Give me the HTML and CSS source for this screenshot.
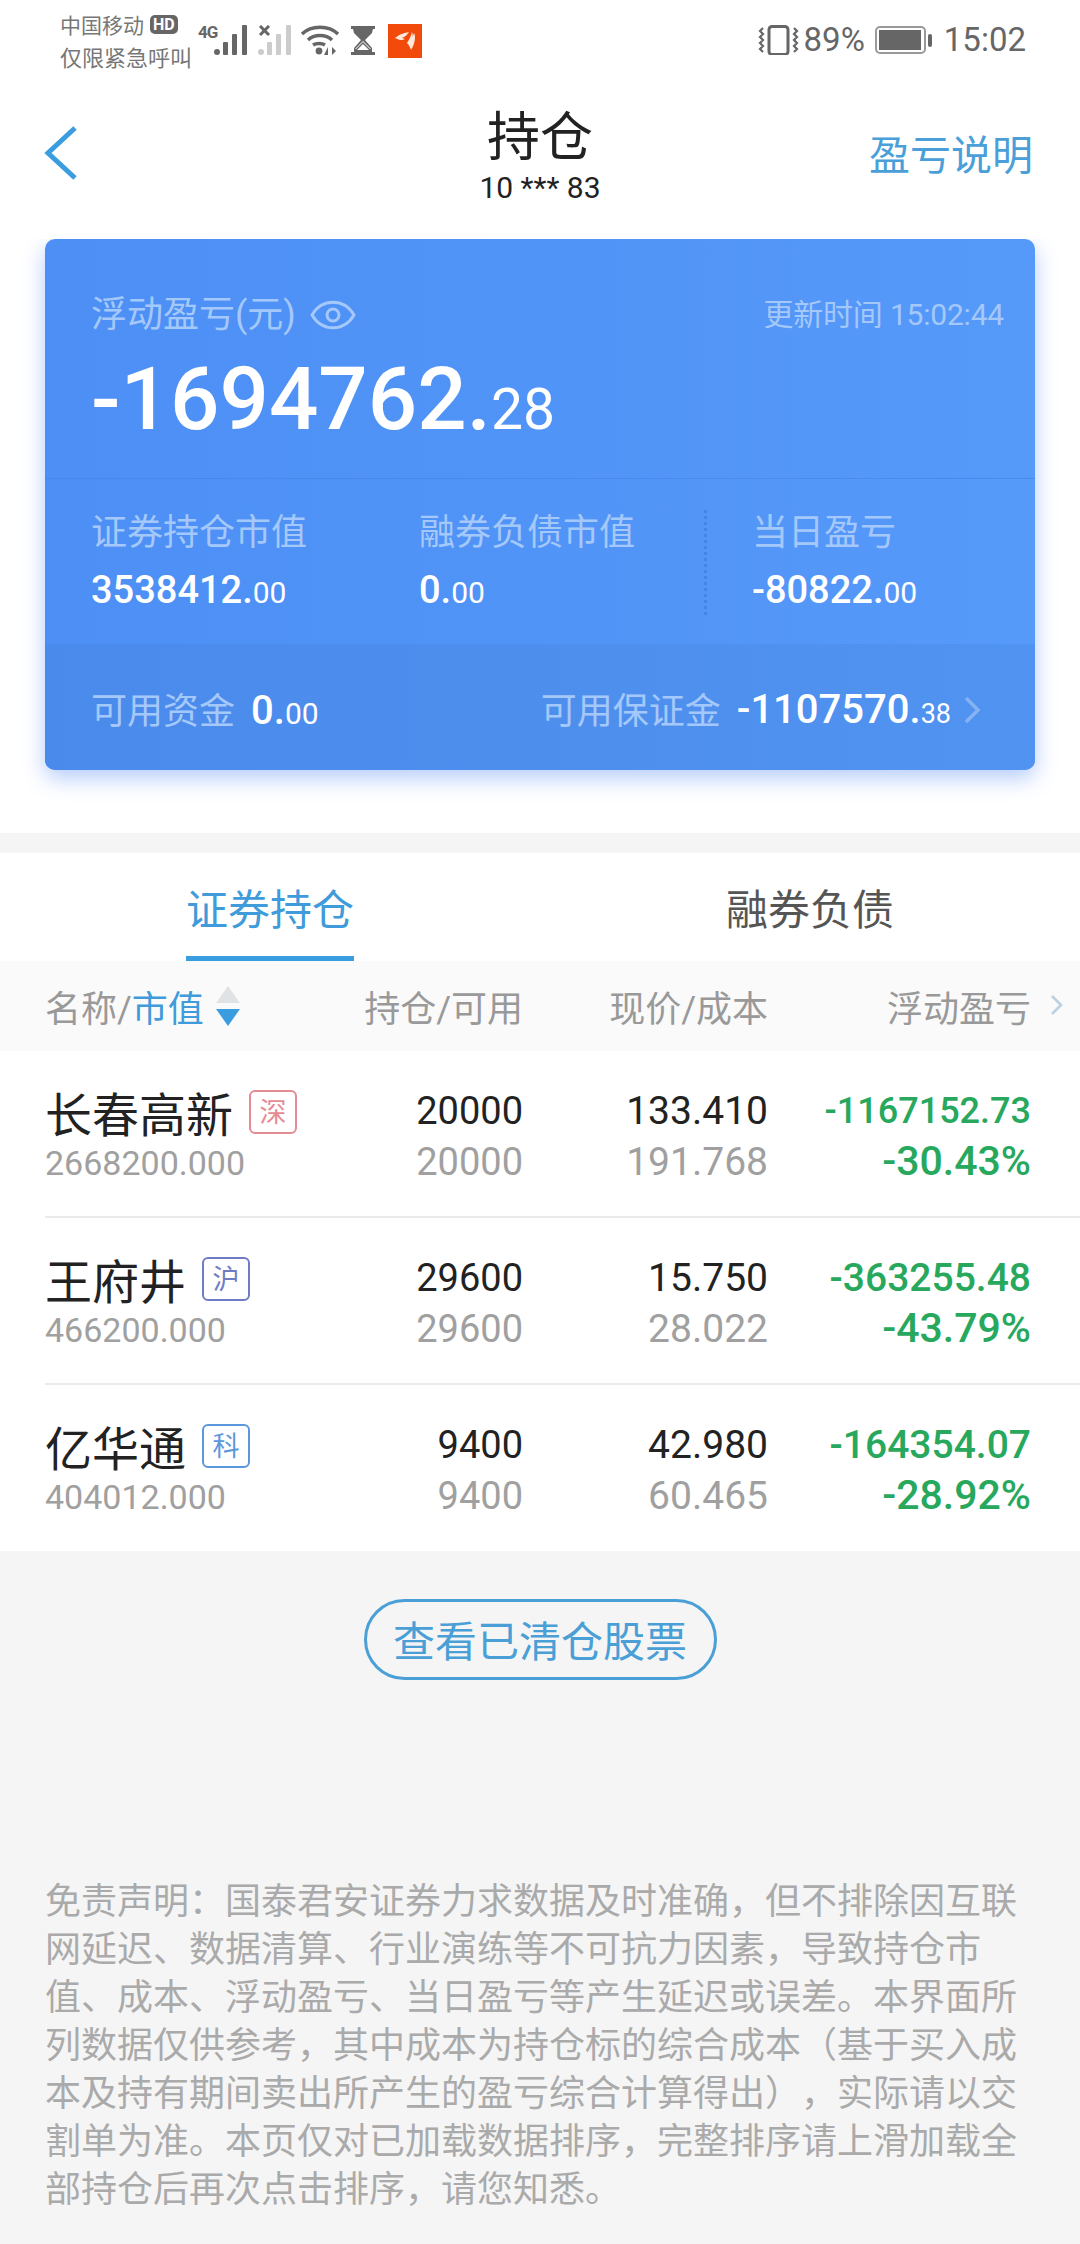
FILE: index.html
```html
<!DOCTYPE html>
<html lang="zh-CN">
<head>
<meta charset="utf-8">
<title>持仓</title>
<link rel="stylesheet" href="styles.css">
</head>
<body>
<div class="page">
  <header class="status">
    <div class="carrier">
      <div class="carrier-line">中国移动<span class="hd">HD</span></div>
      <div class="carrier-line second">仅限紧急呼叫</div>
    </div>
    <span class="net">4G</span>
    <svg class="ic-signal" width="34" height="30" viewBox="0 0 34 30"><circle cx="3" cy="27" r="3" fill="#666"/><rect x="9" y="17" width="5" height="13" rx="1" fill="#666"/><rect x="18" y="9" width="5" height="21" rx="1" fill="#666"/><rect x="28" y="0" width="5" height="30" rx="1" fill="#666"/></svg>
    <svg class="ic-signal2" width="34" height="30" viewBox="0 0 34 30"><path d="M2 1l9 9M11 1l-9 9" stroke="#666" stroke-width="3"/><circle cx="3" cy="27" r="3" fill="#ccc"/><rect x="9" y="17" width="5" height="13" rx="1" fill="#ccc"/><rect x="18" y="9" width="5" height="21" rx="1" fill="#ccc"/><rect x="28" y="0" width="5" height="30" rx="1" fill="#ccc"/></svg>
    <svg class="ic-wifi" width="38" height="30" viewBox="0 0 38 30" fill="none" stroke="#666" stroke-width="3.4"><path d="M1 9C10 0 28 0 37 9"/><path d="M7 15C13 9 25 9 31 15"/><path d="M12 20c3-2 9-2 12 0"/><circle cx="18" cy="26" r="3.4" fill="#666" stroke="none"/><path d="M27 30v-8l-4 8zM31 22v8l4-4z" fill="#666" stroke="none"/></svg>
    <svg class="ic-glass" width="24" height="29" viewBox="0 0 24 29"><rect x="0" y="0" width="24" height="3" fill="#666"/><rect x="0" y="26" width="24" height="3" fill="#666"/><path d="M2 3h20l-1 4-7 7 7 8v4H3v-4l7-8-7-7z" fill="#666"/><path d="M6 24l6-6 6 6z" fill="#fff"/><path d="M12 15l-8 8h1l7-7 7 7h1z" fill="#fff"/></svg>
    <svg class="ic-app" width="34" height="34" viewBox="0 0 34 34"><rect width="34" height="34" fill="#f24a0a"/><path d="M7 14c5-4 9-5 14-6-2 3-4 5-7 6l3 1c-3 2-6 1-10-1z" fill="#ffe9dc"/><path d="M19 19c2-3 4-7 5-11 1 3 1 5 0 7l2-6c2 4 1 10-3 17-1-3-2-5-4-7z" fill="#ffe9dc"/></svg>
    <div class="status-right">
      <svg width="41" height="30" viewBox="0 0 41 30" fill="none" stroke="#666"><rect x="11" y="1.5" width="19" height="28" rx="3" stroke-width="3"/><path d="M5 3l-3 3 3 3-3 3 3 3-3 3 3 3-3 3 3 3M36 3l3 3-3 3 3 3-3 3 3 3-3 3 3 3-3 3" stroke-width="2.2"/></svg>
      <span class="pct">89%</span>
      <svg width="58" height="28" viewBox="0 0 58 28"><rect x="1" y="1" width="49" height="26" rx="4" fill="none" stroke="#999" stroke-width="2"/><rect x="4" y="4" width="42" height="20" fill="#666"/><rect x="53" y="8" width="4" height="13" rx="2" fill="#666"/></svg>
      <span class="clock">15:02</span>
    </div>
  </header>

  <nav class="nav">
    <svg class="back" width="34" height="56" viewBox="0 0 34 56" fill="none"><path d="M31 3L4 28l27 25" stroke="#3a9de0" stroke-width="5"/></svg>
    <div class="nav-title">
      <div class="title">持仓</div>
      <div class="account">10 *** 83</div>
    </div>
    <div class="nav-link">盈亏说明</div>
  </nav>

  <section class="card-wrap">
    <div class="card">
      <div class="card-top">
        <div class="card-head">
          <div class="label-wrap">
            <span class="label">浮动盈亏(元)</span>
            <svg class="eye" width="46" height="32" viewBox="0 0 46 32" fill="none" stroke="#a5c8fa" stroke-width="3"><path d="M2 16C12 -1 34 -1 44 16 34 33 12 33 2 16z"/><circle cx="23" cy="16" r="6"/></svg>
          </div>
          <span class="updated">更新时间 15:02:44</span>
        </div>
        <div class="big">-1694762.<span class="big-dec">28</span></div>
      </div>
      <div class="card-mid">
        <div class="cell">
          <div class="label">证券持仓市值</div>
          <div class="val">3538412.<span class="dec">00</span></div>
        </div>
        <div class="cell">
          <div class="label">融券负债市值</div>
          <div class="val">0.<span class="dec">00</span></div>
        </div>
        <div class="cell cell-last">
          <div class="label">当日盈亏</div>
          <div class="val">-80822.<span class="dec">00</span></div>
        </div>
      </div>
      <div class="card-bottom">
        <div class="pair">
          <span class="label">可用资金</span>
          <span class="val">0.<span class="dec">00</span></span>
        </div>
        <div class="pair">
          <span class="label">可用保证金</span>
          <span class="val">-1107570.<span class="dec small">38</span></span>
          <svg class="more" width="18" height="30" viewBox="0 0 18 30" fill="none"><path d="M3 3l12 12L3 27" stroke="#86b1f2" stroke-width="3.6"/></svg>
        </div>
      </div>
    </div>
  </section>

  <div class="gap"></div>

  <section class="holdings">
    <div class="tabs">
      <div class="tab active"><span class="tab-text">证券持仓</span></div>
      <div class="tab"><span class="tab-text">融券负债</span></div>
    </div>
    <div class="grid head">
      <div class="head-name">名称/<span class="blue">市值</span><svg class="sort" width="24" height="40" viewBox="0 0 24 40"><path d="M12 0l12 17H0z" fill="#dfe3e6"/><path d="M0 23h24L12 40z" fill="#3a9de0"/></svg></div>
      <div class="r">持仓/可用</div>
      <div class="r">现价/成本</div>
      <div class="r head-last">浮动盈亏<svg class="head-more" width="13" height="22" viewBox="0 0 13 22" fill="none"><path d="M2 2l9 9-9 9" stroke="#bcd0e0" stroke-width="2.6"/></svg></div>
    </div>

    <div class="grid row">
      <div>
        <div class="name">长春高新<span class="badge sz">深</span></div>
        <div class="sub">2668200.000</div>
      </div>
      <div class="r"><div class="num">20000</div><div class="sub">20000</div></div>
      <div class="r cost"><div class="num">133.410</div><div class="sub">191.768</div></div>
      <div class="r"><div class="pl long">-1167152.73</div><div class="pl pc">-30.43%</div></div>
    </div>
    <div class="grid row">
      <div>
        <div class="name">王府井<span class="badge sh">沪</span></div>
        <div class="sub">466200.000</div>
      </div>
      <div class="r"><div class="num">29600</div><div class="sub">29600</div></div>
      <div class="r cost"><div class="num">15.750</div><div class="sub">28.022</div></div>
      <div class="r"><div class="pl">-363255.48</div><div class="pl pc">-43.79%</div></div>
    </div>
    <div class="grid row row-last">
      <div>
        <div class="name">亿华通<span class="badge kc">科</span></div>
        <div class="sub">404012.000</div>
      </div>
      <div class="r"><div class="num">9400</div><div class="sub">9400</div></div>
      <div class="r cost"><div class="num">42.980</div><div class="sub">60.465</div></div>
      <div class="r"><div class="pl">-164354.07</div><div class="pl pc">-28.92%</div></div>
    </div>
  </section>

  <section class="foot">
    <div class="cleared">查看已清仓股票</div>
    <p class="disclaimer">免责声明：国泰君安证券力求数据及时准确，但不排除因互联网延迟、数据清算、行业演练等不可抗力因素，导致持仓市值、成本、浮动盈亏、当日盈亏等产生延迟或误差。本界面所列数据仅供参考，其中成本为持仓标的综合成本（基于买入成本及持有期间卖出所产生的盈亏综合计算得出），实际请以交割单为准。本页仅对已加载数据排序，完整排序请上滑加载全部持仓后再次点击排序，请您知悉。</p>
  </section>
</div>
</body>
</html>
```
FILE: styles.css
```css
* { box-sizing: border-box; }
html, body { margin: 0; padding: 0; }
body {
  width: 1080px;
  height: 2244px;
  overflow: hidden;
  background: #f5f5f5;
  font-family: Roboto, "Noto Sans CJK SC", sans-serif;
  text-spacing-trim: space-all;
}
.page { width: 1080px; height: 2244px; display: flex; flex-direction: column; }

/* status bar */
.status { height: 75px; background: #fff; display: flex; align-items: flex-start; padding-left: 60px; position: relative; flex: none; }
.carrier { width: 138px; padding-top: 8px; color: #777; font-size: 21px; line-height: 32px; font-family: "Noto Sans CJK SC", sans-serif; }
.carrier-line { display: flex; align-items: center; white-space: nowrap; }
.second { font-size: 22px; }
.hd { margin-left: 6px; background: #666; color: #fff; font: 700 16px/19px Roboto, sans-serif; border-radius: 5px; padding: 0 3px; }
.net { margin-top: 22px; color: #666; font: 700 17px/20px Roboto, sans-serif; letter-spacing: -1px; width: 16px; white-space: nowrap; }
.ic-signal { margin-top: 25px; }
.ic-signal2 { margin: 25px 0 0 10px; }
.ic-wifi { margin: 25px 0 0 9px; }
.ic-glass { margin: 26px 0 0 12px; }
.ic-app { margin: 24px 0 0 13px; }
.status-right { margin-left: auto; padding: 25px 54px 0 0; display: flex; align-items: center; color: #666; height: 55px; }
.pct { font-size: 33px; line-height: 30px; margin: 0 10px 0 5px; }
.clock { font-size: 33px; line-height: 30px; margin-left: 11px; }

/* nav */
.nav { height: 164px; background: #fff; position: relative; display: flex; justify-content: center; flex: none; }
.back { position: absolute; left: 44px; top: 50px; }
.nav-title { text-align: center; padding-top: 26px; }
.title { font: 400 53px/64px "Noto Sans CJK SC", sans-serif; color: #222; }
.account { font-size: 30px; line-height: 38px; color: #222; margin-top: 4px; }
.nav-link { position: absolute; right: 47px; top: 48px; font: 400 41px/58px "Noto Sans CJK SC", sans-serif; color: #4a9fd8; }

/* card */
.card-wrap { background: #fff; padding: 0 45px 63px; flex: none; }
.card {
  height: 531px;
  border-radius: 10px;
  background: linear-gradient(90deg, #4d8ff5, #5599f9);
  box-shadow: 0 8px 22px rgba(77, 130, 245, .42);
  display: flex;
  flex-direction: column;
  color: #fff;
}
.card-top { height: 240px; padding: 51px 31px 0 46px; border-bottom: 1px solid rgba(66, 130, 230, .6); flex: none; }
.card-head { display: flex; justify-content: space-between; align-items: center; height: 50px; }
.label-wrap { display: flex; align-items: center; }
.label { font-size: 36px; line-height: 46px; color: #a5c8fa; white-space: nowrap; }
.eye { margin-left: 14px; }
.updated { color: #a5c8fa; font-size: 30px; line-height: 40px; letter-spacing: -.2px; }
.big { font-size: 87px; font-weight: 500; line-height: 100px; margin-top: 9px; white-space: nowrap; }
.big-dec { font-size: 57px; font-weight: 400; }
.card-mid { height: 165px; padding: 31px 0 0 46px; display: grid; grid-template-columns: 328px 285px 1fr; align-content: start; flex: none; }
.cell { height: 105px; }
.cell-last { border-left: 3px dotted #4385e6; padding-left: 45px; }
.val { font-size: 38px; font-weight: 500; line-height: 52px; white-space: nowrap; }
.cell .val { margin-top: 8px; }
.dec { font-size: 30px; font-weight: 400; }
.dec.small { font-size: 27px; }
.card-bottom {
  height: 126px;
  background: linear-gradient(90deg, #4a8aeb, #5193f0);
  border-radius: 0 0 10px 10px;
  padding: 10px 54px 0 46px;
  display: flex;
  justify-content: space-between;
  align-items: center;
  flex: none;
}
.pair { display: flex; align-items: center; gap: 16px; }
.pair .val { font-size: 40px; }
.more { margin: 0 0 4px -4px; }

.gap { height: 20px; background: #f5f5f5; flex: none; }

/* holdings */
.holdings { background: #fff; flex: none; }
.tabs { height: 108px; display: grid; grid-template-columns: 1fr 1fr; }
.tab { display: flex; justify-content: center; }
.tab-text { height: 108px; padding: 25px 0 0; font: 400 42px/58px "Noto Sans CJK SC", sans-serif; color: #555; }
.tab.active .tab-text { color: #3f9bd9; border-bottom: 5px solid #3a9de0; }
.grid { display: grid; grid-template-columns: 300px 178px 245px 263px; padding: 0 0 0 45px; }
.head { height: 90px; background: #fafafa; align-items: center; font-size: 36px; color: #999; white-space: nowrap; }
.head-name { display: flex; align-items: center; white-space: pre; }
.blue { color: #3f9bd9; }
.sort { margin-left: 12px; }
.r { text-align: right; }
.head-last { position: relative; }
.head-more { position: absolute; right: -32px; top: 14px; }
.row { height: 167px; padding-top: 34px; position: relative; }
.row::after { content: ""; position: absolute; left: 45px; right: 0; bottom: 0; height: 2px; background: #ebebeb; }
.row-last { height: 166px; }
.row-last::after { display: none; }
.name { font: 400 47px/53px "Noto Sans CJK SC", sans-serif; color: #222; display: flex; align-items: center; white-space: nowrap; }
.badge { width: 48px; height: 44px; margin-left: 16px; border: 2px solid; border-radius: 6px; font-size: 27px; line-height: 38px; text-align: center; }
.sz { color: #e58b93; border-color: #e58b93; }
.sh { color: #6f7cc4; border-color: #6f7cc4; }
.kc { color: #5b97dc; border-color: #5b97dc; }
.sub { font-size: 38px; line-height: 50px; color: #a0a0a0; }
.row > div:first-child .sub { font-size: 34px; }
.cost .num, .cost .sub { font-size: 39px; }
.num { font-size: 38px; line-height: 52px; color: #222; }
.pl { font-size: 39px; font-weight: 500; line-height: 52px; color: #27a85d; white-space: nowrap; }
.pl.long { font-size: 36px; }
.pl.pc { font-size: 41px; line-height: 48px; }

/* foot */
.foot { background: #f5f5f5; flex: 1; padding-top: 48px; }
.cleared { width: 353px; height: 81px; margin: 0 auto; border: 3px solid #4a9fd6; border-radius: 41px; text-align: center; font: 400 42px/73px "Noto Sans CJK SC", sans-serif; color: #4a9fd6; }
.disclaimer { margin: 194px 0 0; padding: 0 45px; width: 1062px; font: 400 36px/48px "Noto Sans CJK SC", sans-serif; color: #aaa; }
```
